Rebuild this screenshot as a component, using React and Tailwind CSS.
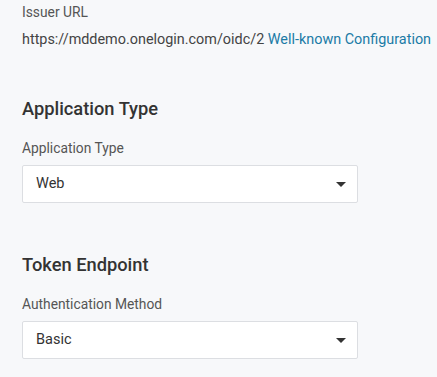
import React from "react";

const SelectBox = ({ value }) => {
  return (
    <div className="mt-[7px] flex h-[38px] w-[336px] items-center justify-between rounded-[2px] border border-[#dcdee2] bg-white pl-[13px] pr-[11px]">
      <span className="text-[14.5px] text-[#333]">{value}</span>
      <svg width="10" height="5" viewBox="0 0 10 5">
        <path d="M0 0 L10 0 L5 5 Z" fill="#333" />
      </svg>
    </div>
  );
};

const App = () => {
  return (
    <div
      className="min-h-[377px] w-full bg-[#f7f8fa] pl-[22px] pt-[2px]"
      style={{ fontFamily: "Roboto, 'Liberation Sans', sans-serif" }}
    >
      {/* Issuer URL */}
      <div className="h-5 text-[13.8px] leading-5 text-[#555]">Issuer URL</div>
      <div className="mt-2 h-5 whitespace-nowrap text-[14.4px] leading-5 text-[#444]">
        https://mddemo.onelogin.com/oidc/2{" "}
        <a href="#" className="text-[#1b7ba6]">
          Well-known Configuration
        </a>
      </div>

      {/* Application Type */}
      <h2 className="mt-[47px] h-6 text-[18.3px] font-medium leading-6 text-[#333]">
        Application Type
      </h2>
      <div className="mt-[17px] h-5 text-[13.8px] leading-5 text-[#555]">
        Application Type
      </div>
      <SelectBox value="Web" />

      {/* Token Endpoint */}
      <h2 className="mt-[50px] h-6 text-[18.3px] font-medium leading-6 text-[#333]">
        Token Endpoint
      </h2>
      <div className="mt-[17px] h-5 text-[13.8px] leading-5 text-[#555]">
        Authentication Method
      </div>
      <SelectBox value="Basic" />
    </div>
  );
};

export default App;
